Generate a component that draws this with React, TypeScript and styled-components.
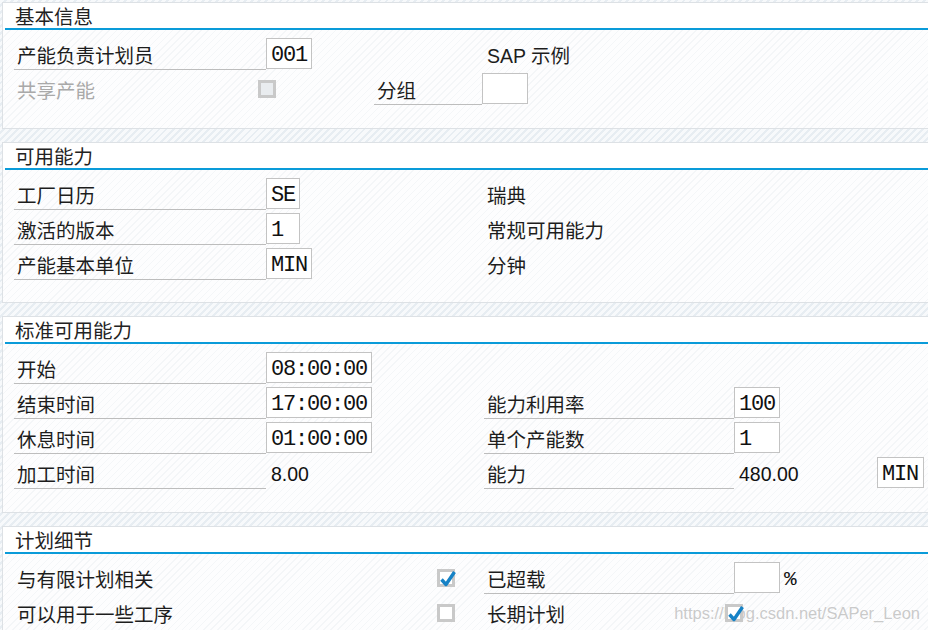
import React from "react";
import styled, { createGlobalStyle } from "styled-components";

const GlobalStyle = createGlobalStyle`
  html, body {
    margin: 0;
    padding: 0;
  }
  body {
    width: 928px;
    height: 630px;
    overflow: hidden;
    background: repeating-linear-gradient(135deg, #f7f9fb 0 3px, #e7edf2 3px 5px);
    font-family: "Noto Sans CJK SC", sans-serif;
  }
`;

const Page = styled.div`
  position: relative;
  height: 630px;
  padding-top: 2px;
  box-sizing: border-box;
  display: flex;
  flex-direction: column;
  gap: 13px;
`;

const Panel = styled.section`
  margin-left: 2px;
  border: 1px solid #dde1e5;
  border-right: none;
  background: repeating-linear-gradient(135deg, #fdfdfe 0 4px, #f4f6f8 4px 5px);
  flex-shrink: 0;
`;

const PanelHead = styled.div`
  background: #fff;
  padding-left: 2px;
`;

const PanelTitle = styled.div`
  height: 25px;
  padding-left: 10px;
  border-bottom: 2px solid #0a9bd9;
  font-size: 19.5px;
  line-height: 25px;
  color: #222;
`;

const PanelBody = styled.div<{ $bottom?: number }>`
  padding: 7px 0 ${(p) => p.$bottom ?? 25}px 11px;
  display: flex;
  flex-direction: column;
  gap: 4px;
`;

const Row = styled.div`
  display: grid;
  grid-template-columns: 252px 218px 250px 143px 1fr;
  height: 31px;
  align-items: center;

  & > * {
    grid-row: 1;
  }
`;

const Label = styled.div<{ $plain?: boolean; $muted?: boolean; $col?: number; $w?: number }>`
  grid-column: ${(p) => p.$col ?? 1};
  align-self: stretch;
  display: flex;
  align-items: center;
  box-sizing: border-box;
  width: ${(p) => (p.$w ? `${p.$w}px` : "auto")};
  padding: 3px 0 0 3px;
  border-bottom: 1px solid ${(p) => (p.$plain ? "transparent" : "#bdbdbd")};
  font-size: 19.5px;
  color: ${(p) => (p.$muted ? "#a9a9a9" : "#1d1d1d")};
  white-space: nowrap;
`;

const Field = styled.div<{ $w: number; $col?: number }>`
  grid-column: ${(p) => p.$col ?? 2};
  width: ${(p) => p.$w}px;
  height: 31px;
  box-sizing: border-box;
  border: 1px solid #c3c3c3;
  background: #fff;
  padding: 4px 0 0 4px;
  font-family: "Liberation Mono", monospace;
  font-size: 22px;
  letter-spacing: -1.2px;
  line-height: 25px;
  color: #111;
  white-space: nowrap;
  overflow: hidden;
`;

const Value = styled.div<{ $col?: number }>`
  grid-column: ${(p) => p.$col ?? 2};
  padding: 3px 0 0 5px;
  font-family: "Liberation Sans", Arial, sans-serif;
  font-size: 19.5px;
  color: #111;
`;

const Desc = styled.div<{ $col?: number }>`
  grid-column: ${(p) => p.$col ?? 3};
  padding: 1px 0 0 3px;
  font-family: "Liberation Sans", "Noto Sans CJK SC", sans-serif;
  font-size: 19.5px;
  color: #1d1d1d;
  white-space: nowrap;
`;

const Group = styled.div<{ $col: string; $indent?: number }>`
  grid-column: ${(p) => p.$col};
  align-self: stretch;
  display: flex;
  align-items: center;
  gap: 4px;
  padding-left: ${(p) => p.$indent ?? 0}px;
`;

const Unit = styled.span`
  padding-top: 3px;
  font-family: "Liberation Mono", monospace;
  font-size: 21px;
  color: #111;
`;

const Box = styled.span<{ $col: number; $right: number; $disabled?: boolean }>`
  grid-column: ${(p) => p.$col};
  justify-self: end;
  margin-right: ${(p) => p.$right}px;
  position: relative;
  z-index: 1;
  width: 18px;
  height: 18px;
  box-sizing: border-box;
  border: 3px solid #c9c9c9;
  background: ${(p) => (p.$disabled ? "#e9ecef" : "#fff")};
`;

const Tick = styled.svg`
  position: absolute;
  left: -1px;
  top: -3px;
  width: 18px;
  height: 18px;
  overflow: visible;
`;

const Watermark = styled.div`
  position: absolute;
  right: 8px;
  bottom: 7px;
  font-family: "Liberation Sans", Arial, sans-serif;
  font-size: 16.5px;
  color: rgba(185, 185, 185, 0.75);
  white-space: nowrap;
`;

const CheckBox = ({
  col,
  right,
  checked,
  disabled,
}: {
  col: number;
  right: number;
  checked?: boolean;
  disabled?: boolean;
}) => (
  <Box $col={col} $right={right} $disabled={disabled}>
    {checked && (
      <Tick viewBox="0 0 18 18">
        <path d="M2.5 10.5 L7 15.5 L15.5 3" fill="none" stroke="#1682c6" strokeWidth="3.4" strokeLinejoin="round" />
      </Tick>
    )}
  </Box>
);

export default function App() {
  return (
    <>
      <GlobalStyle />
      <Page>
        <Panel>
          <PanelHead>
            <PanelTitle>基本信息</PanelTitle>
          </PanelHead>
          <PanelBody>
            <Row>
              <Label>产能负责计划员</Label>
              <Field $w={46}>001</Field>
              <Desc>SAP 示例</Desc>
            </Row>
            <Row>
              <Label $plain $muted>共享产能</Label>
              <CheckBox col={1} right={-10} disabled />
              <Group $col="2 / 4" $indent={108}>
                <Label $w={108} style={{ gridColumn: "auto" }}>分组</Label>
                <Field $w={46} style={{ marginLeft: -4 }} />
              </Group>
            </Row>
          </PanelBody>
        </Panel>

        <Panel>
          <PanelHead>
            <PanelTitle>可用能力</PanelTitle>
          </PanelHead>
          <PanelBody $bottom={24}>
            <Row>
              <Label>工厂日历</Label>
              <Field $w={34}>SE</Field>
              <Desc>瑞典</Desc>
            </Row>
            <Row>
              <Label>激活的版本</Label>
              <Field $w={34}>1</Field>
              <Desc>常规可用能力</Desc>
            </Row>
            <Row>
              <Label>产能基本单位</Label>
              <Field $w={46}>MIN</Field>
              <Desc>分钟</Desc>
            </Row>
          </PanelBody>
        </Panel>

        <Panel>
          <PanelHead>
            <PanelTitle>标准可用能力</PanelTitle>
          </PanelHead>
          <PanelBody>
            <Row>
              <Label>开始</Label>
              <Field $w={106}>08:00:00</Field>
            </Row>
            <Row>
              <Label>结束时间</Label>
              <Field $w={106}>17:00:00</Field>
              <Label $col={3}>能力利用率</Label>
              <Field $col={4} $w={46}>100</Field>
            </Row>
            <Row>
              <Label>休息时间</Label>
              <Field $w={106}>01:00:00</Field>
              <Label $col={3}>单个产能数</Label>
              <Field $col={4} $w={46}>1</Field>
            </Row>
            <Row>
              <Label>加工时间</Label>
              <Value>8.00</Value>
              <Label $col={3}>能力</Label>
              <Value $col={4}>480.00</Value>
              <Field $col={5} $w={47}>MIN</Field>
            </Row>
          </PanelBody>
        </Panel>

        <Panel>
          <PanelHead>
            <PanelTitle>计划细节</PanelTitle>
          </PanelHead>
          <PanelBody>
            <Row>
              <Label $plain>与有限计划相关</Label>
              <CheckBox col={2} right={29} checked />
              <Label $col={3}>已超载</Label>
              <Group $col="4">
                <Field $w={46} style={{ gridColumn: "auto" }} />
                <Unit>%</Unit>
              </Group>
            </Row>
            <Row>
              <Label $plain>可以用于一些工序</Label>
              <CheckBox col={2} right={29} />
              <Label $plain $col={3}>长期计划</Label>
              <CheckBox col={3} right={-9} checked />
            </Row>
          </PanelBody>
        </Panel>

        <Watermark>https://blog.csdn.net/SAPer_Leon</Watermark>
      </Page>
    </>
  );
}
